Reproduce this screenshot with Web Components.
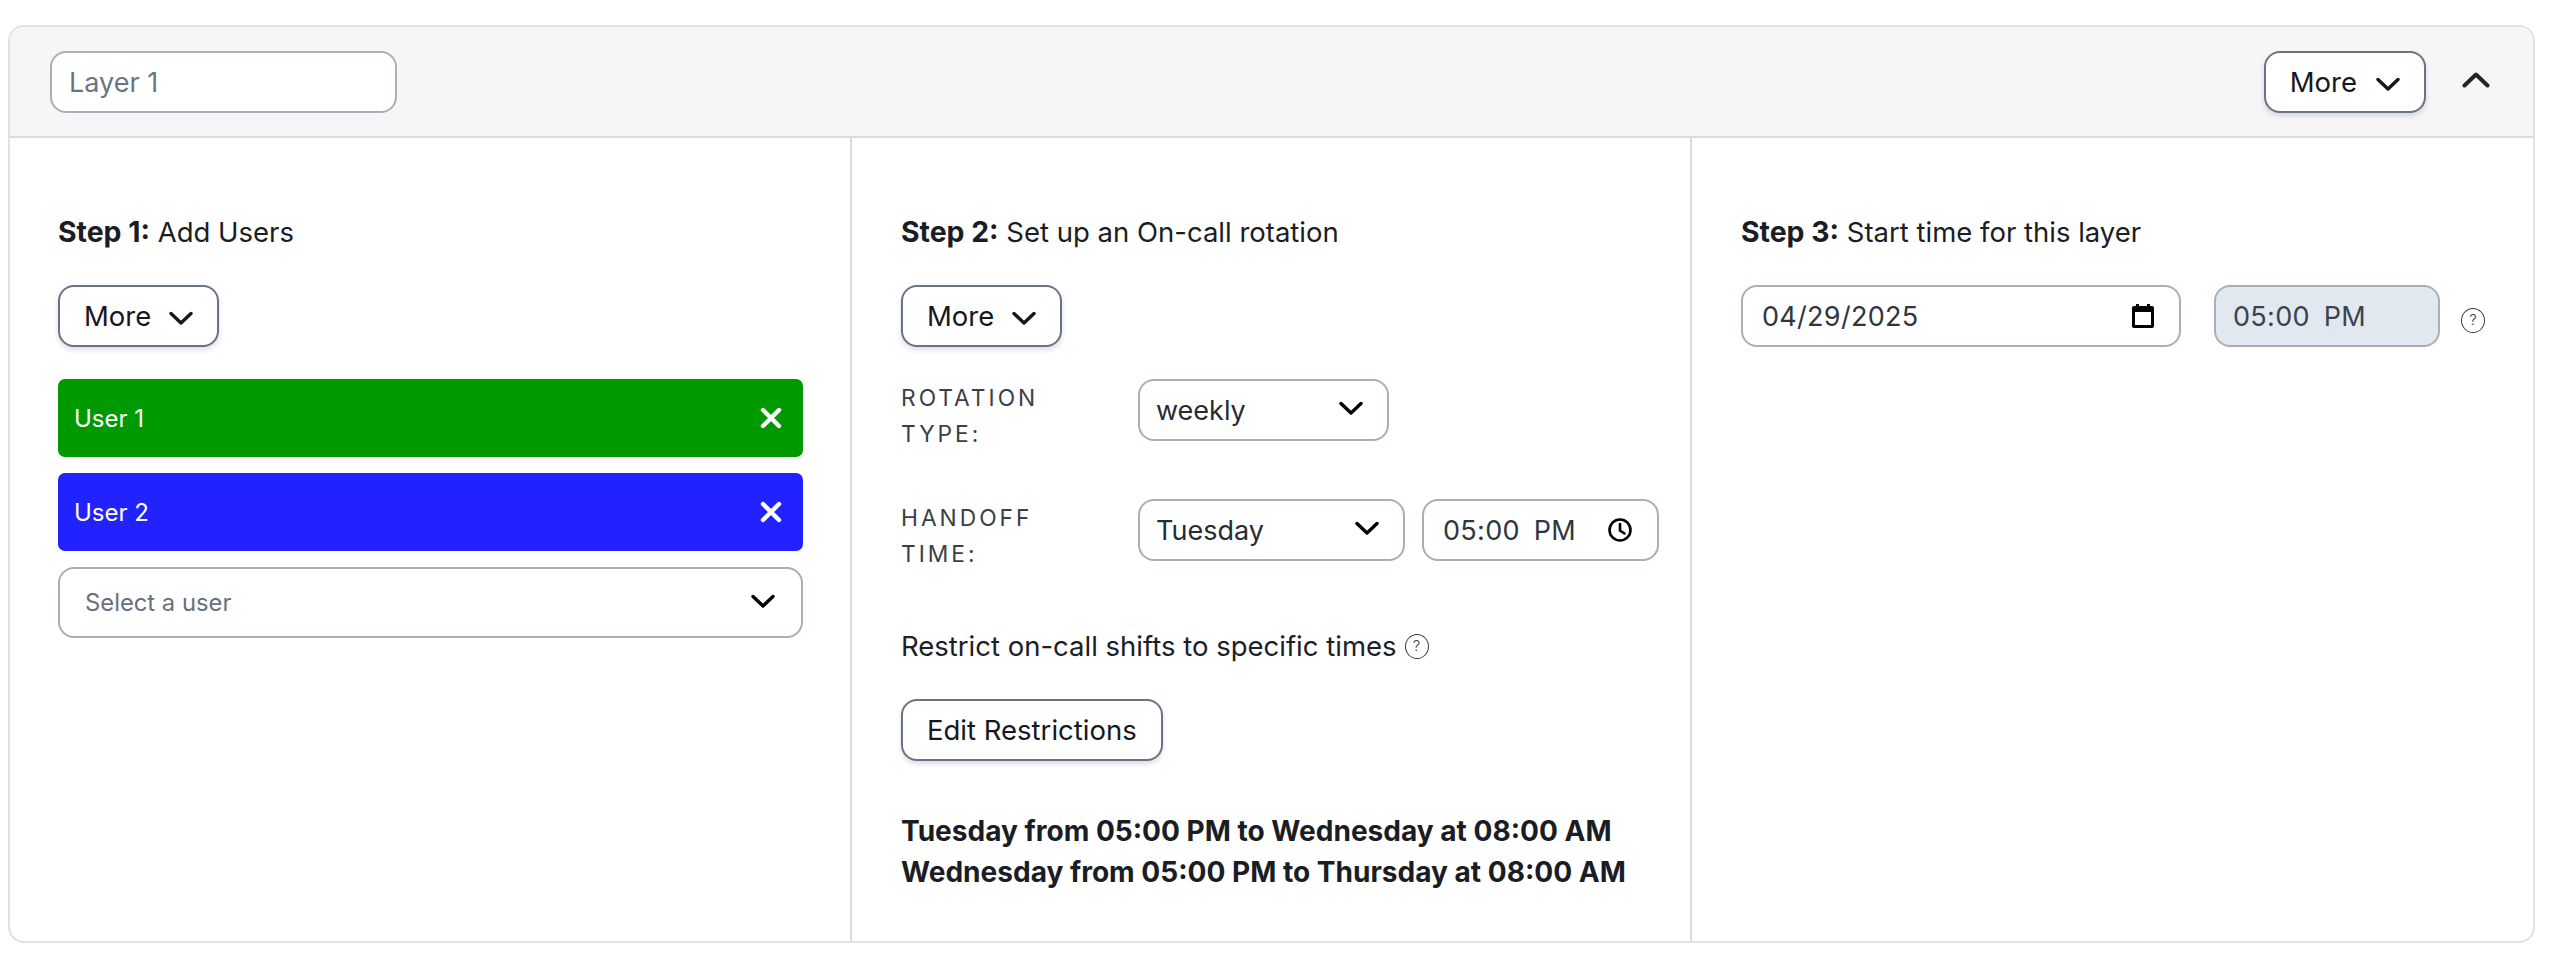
<!DOCTYPE html>
<html>
<head>
<meta charset="utf-8">
<style>
  html, body { margin: 0; background: #fff; }
  body { padding: 25px 15px 13px 8px; font-family: Inter, "Noto Sans", sans-serif; font-size: 27.5px; color: #1a1d24; }
</style>
</head>
<body>
<schedule-layer>
  <text-field slot="name" placeholder style="width:347px;--tpad:17px">Layer 1</text-field>
  <more-button slot="actions" style="--gap:19px"></more-button>
  <collapse-button slot="actions"></collapse-button>

  <layer-step style="--pad:48px" label="Step 1:" title="Add Users">
    <more-button class="after-title"></more-button>
    <div style="display:flex;flex-direction:column;gap:16px;margin-top:32px;width:745px">
      <user-pill color="#009900">User 1</user-pill>
      <user-pill color="#2222ff">User 2</user-pill>
      <select-box small style="width:745px">Select a user</select-box>
    </div>
  </layer-step>

  <layer-step style="--pad:49px" label="Step 2:" title="Set up an On-call rotation">
    <more-button></more-button>
    <field-row style="margin-top:32px" text="ROTATION TYPE:">
      <select-box style="width:251px">weekly</select-box>
    </field-row>
    <field-row style="margin-top:48px" text="HANDOFF TIME:">
      <select-box style="width:267px">Tuesday</select-box>
      <text-field time icon="clock" style="width:237px;margin-left:17px;--tpad:19px">05:00 PM</text-field>
    </field-row>
    <restrict-note style="margin-top:55px">Restrict on-call shifts to specific times</restrict-note>
    <more-button plain style="margin-top:33px">Edit Restrictions</more-button>
    <shift-list style="margin-top:50px">
      <div>Tuesday from 05:00 PM to Wednesday at 08:00 AM</div>
      <div>Wednesday from 05:00 PM to Thursday at 08:00 AM</div>
    </shift-list>
  </layer-step>

  <layer-step style="--pad:49px" label="Step 3:" title="Start time for this layer" last>
    <div style="display:flex;align-items:flex-start">
      <text-field icon="calendar" style="width:440px;--tpad:19px">04/29/2025</text-field>
      <text-field time disabled style="width:226px;margin-left:33px;--tpad:17px">05:00 PM</text-field>
      <help-icon style="margin:23px 0 0 21px"></help-icon>
    </div>
  </layer-step>
</schedule-layer>

<script>
const CHEVRON = `<svg width="24" height="14" viewBox="0 0 24 14" fill="none" stroke="currentColor" stroke-width="3.4" stroke-linecap="round" stroke-linejoin="round"><path d="M2 2.5l10 9.5 10-9.5"/></svg>`;

class ScheduleLayer extends HTMLElement {
  constructor() {
    super();
    this.attachShadow({ mode: 'open' });
    this.shadowRoot.innerHTML = `
      <style>
        :host { display: block; height: 918px; box-sizing: border-box; border: 2px solid #dfe1e3; border-radius: 16px; overflow: hidden; }
        .head { height: 111px; box-sizing: border-box; background: #f6f6f7; border-bottom: 2px solid #d9dbde; display: flex; align-items: flex-start; justify-content: space-between; padding: 24px 43px 0 40px; }
        .actions { display: flex; align-items: flex-start; gap: 36px; }
        .body { display: grid; grid-template-columns: 842px 840px 1fr; height: 805px; }
      </style>
      <div class="head">
        <slot name="name"></slot>
        <div class="actions"><slot name="actions"></slot></div>
      </div>
      <div class="body"><slot></slot></div>
    `;
  }
}

class LayerStep extends HTMLElement {
  constructor() {
    super();
    this.attachShadow({ mode: 'open' });
  }
  connectedCallback() {
    this.shadowRoot.innerHTML = `
      <style>
        :host { display: block; box-sizing: border-box; padding: 73px 0 0 var(--pad); border-right: 2px solid #d9dbde; }
        :host([last]) { border-right: 0; }
        h3 { margin: 0 0 32px; font-size: 27.5px; font-weight: 400; line-height: 42px; height: 42px; color: #1a1d24; white-space: nowrap; }
        b { font-weight: 700; font-size: 28.4px; }
      </style>
      <h3><b>${this.getAttribute('label')}</b> ${this.getAttribute('title')}</h3>
      <slot></slot>
    `;
  }
}

class MoreButton extends HTMLElement {
  constructor() {
    super();
    this.attachShadow({ mode: 'open' });
  }
  connectedCallback() {
    const hasText = this.hasAttribute('plain');
    this.shadowRoot.innerHTML = `
      <style>
        :host { display: block; width: fit-content; }
        .btn { height: 62px; box-sizing: border-box; display: flex; align-items: center; gap: var(--gap, 18px); padding: 0 24px; background: #fff; border: 2px solid #687486; border-radius: 16px; box-shadow: 0 3px 5px rgba(60,70,90,.18); font-size: 27.5px; color: #16181d; white-space: nowrap; }
        svg { margin-top: 4px; }
      </style>
      <div class="btn">${hasText ? '<slot></slot>' : 'More ' + CHEVRON}</div>
    `;
  }
}

class CollapseButton extends HTMLElement {
  constructor() {
    super();
    this.attachShadow({ mode: 'open' });
    this.shadowRoot.innerHTML = `
      <style>
        :host { display: block; width: 28px; height: 62px; color: #22252b; }
        svg { display: block; margin-top: 21px; }
      </style>
      <svg width="28" height="16" viewBox="0 0 28 16" fill="none" stroke="currentColor" stroke-width="4" stroke-linecap="round" stroke-linejoin="round"><path d="M2.500 13.500L14 2.500l11.500 11"/></svg>
    `;
  }
}

class TextField extends HTMLElement {
  constructor() {
    super();
    this.attachShadow({ mode: 'open' });
  }
  connectedCallback() {
    const icons = {
      clock: `<svg width="26" height="26" viewBox="0 0 26 26" fill="none" stroke="#000" stroke-width="2.6"><circle cx="13" cy="13" r="10.500"/><path d="M13 7v6.500l4.500 3" stroke-linecap="round"/></svg>`,
      calendar: `<svg width="24" height="24" viewBox="0 0 24 24"><path fill="#000" d="M5 0h3v2h8V0h3v2h2a2 2 0 0 1 2 2v18a2 2 0 0 1-2 2H3a2 2 0 0 1-2-2V4a2 2 0 0 1 2-2h2zM4 8v13h16V8z"/></svg>`
    };
    const icon = icons[this.getAttribute('icon')] || '';
    this.shadowRoot.innerHTML = `
      <style>
        :host { display: block; --tpad: 18px; }
        .box { height: 62px; box-sizing: border-box; display: flex; align-items: center; justify-content: space-between; padding: 0 24px 0 var(--tpad); background: #fff; border: 2px solid #a9aeba; border-radius: 16px; font-size: 27px; color: #2f3642; letter-spacing: .3px; white-space: nowrap; }
        :host([placeholder]) .box { color: #6b7482; letter-spacing: 0; }
        :host([time]) .box { word-spacing: 6px; }
        :host([disabled]) .box { background: #e2e8f0; color: #3a4350; }
        svg { flex: none; }
      </style>
      <div class="box"><span><slot></slot></span>${icon}</div>
    `;
  }
}

class SelectBox extends HTMLElement {
  constructor() {
    super();
    this.attachShadow({ mode: 'open' });
    this.shadowRoot.innerHTML = `
      <style>
        :host { display: block; }
        .box { height: 62px; box-sizing: border-box; display: flex; align-items: center; justify-content: space-between; padding: 0 24px 0 16px; background: #fff; border: 2px solid #a9aeba; border-radius: 16px; font-size: 27px; color: #262b34; }
        :host([small]) .box { height: 71px; padding: 0 26px 0 25px; font-size: 23.8px; color: #68707e; }
        svg { color: #000; margin-top: -4px; }
      </style>
      <div class="box"><span><slot></slot></span>${CHEVRON}</div>
    `;
  }
}

class UserPill extends HTMLElement {
  constructor() {
    super();
    this.attachShadow({ mode: 'open' });
  }
  connectedCallback() {
    this.shadowRoot.innerHTML = `
      <style>
        :host { display: block; }
        .pill { height: 78px; box-sizing: border-box; display: flex; align-items: center; justify-content: space-between; padding: 0 21px 0 16px; border-radius: 7px; background: ${this.getAttribute('color')}; color: #fff; font-size: 24px; }
      </style>
      <div class="pill">
        <span><slot></slot></span>
        <svg width="22" height="22" viewBox="0 0 22 22" fill="none" stroke="#fff" stroke-width="4.400" stroke-linecap="round"><path d="M3 3l16 16M19 3L3 19"/></svg>
      </div>
    `;
  }
}

class FieldRow extends HTMLElement {
  constructor() {
    super();
    this.attachShadow({ mode: 'open' });
  }
  connectedCallback() {
    this.shadowRoot.innerHTML = `
      <style>
        :host { display: flex; align-items: flex-start; }
        label { flex: none; width: 237px; box-sizing: border-box; padding: 1px 80px 0 0; margin-bottom: -1px; font-size: 22.75px; line-height: 36px; letter-spacing: 3px; color: #3a3f48; }
      </style>
      <label>${this.getAttribute('text')}</label>
      <slot></slot>
    `;
  }
}

class HelpIcon extends HTMLElement {
  constructor() {
    super();
    this.attachShadow({ mode: 'open' });
    this.shadowRoot.innerHTML = `
      <style>
        :host { display: block; width: 24px; height: 25px; box-sizing: border-box; border: 1.2px solid #333840; border-radius: 50%; font-size: 15px; font-weight: 300; line-height: 22px; text-align: center; color: #333840; }
      </style>?
    `;
  }
}

class RestrictNote extends HTMLElement {
  constructor() {
    super();
    this.attachShadow({ mode: 'open' });
    this.shadowRoot.innerHTML = `
      <style>
        :host { display: flex; align-items: center; gap: 8px; height: 40px; font-size: 27.5px; color: #1c2027; white-space: nowrap; }
      </style>
      <span><slot></slot></span><help-icon></help-icon>
    `;
  }
}

class ShiftList extends HTMLElement {
  constructor() {
    super();
    this.attachShadow({ mode: 'open' });
    this.shadowRoot.innerHTML = `
      <style>
        :host { display: block; font-size: 28.05px; font-weight: 700; line-height: 41px; color: #1a1d24; white-space: nowrap; }
      </style>
      <slot></slot>
    `;
  }
}

customElements.define('help-icon', HelpIcon);
customElements.define('schedule-layer', ScheduleLayer);
customElements.define('layer-step', LayerStep);
customElements.define('more-button', MoreButton);
customElements.define('collapse-button', CollapseButton);
customElements.define('text-field', TextField);
customElements.define('select-box', SelectBox);
customElements.define('user-pill', UserPill);
customElements.define('field-row', FieldRow);
customElements.define('restrict-note', RestrictNote);
customElements.define('shift-list', ShiftList);
</script>
</body>
</html>
